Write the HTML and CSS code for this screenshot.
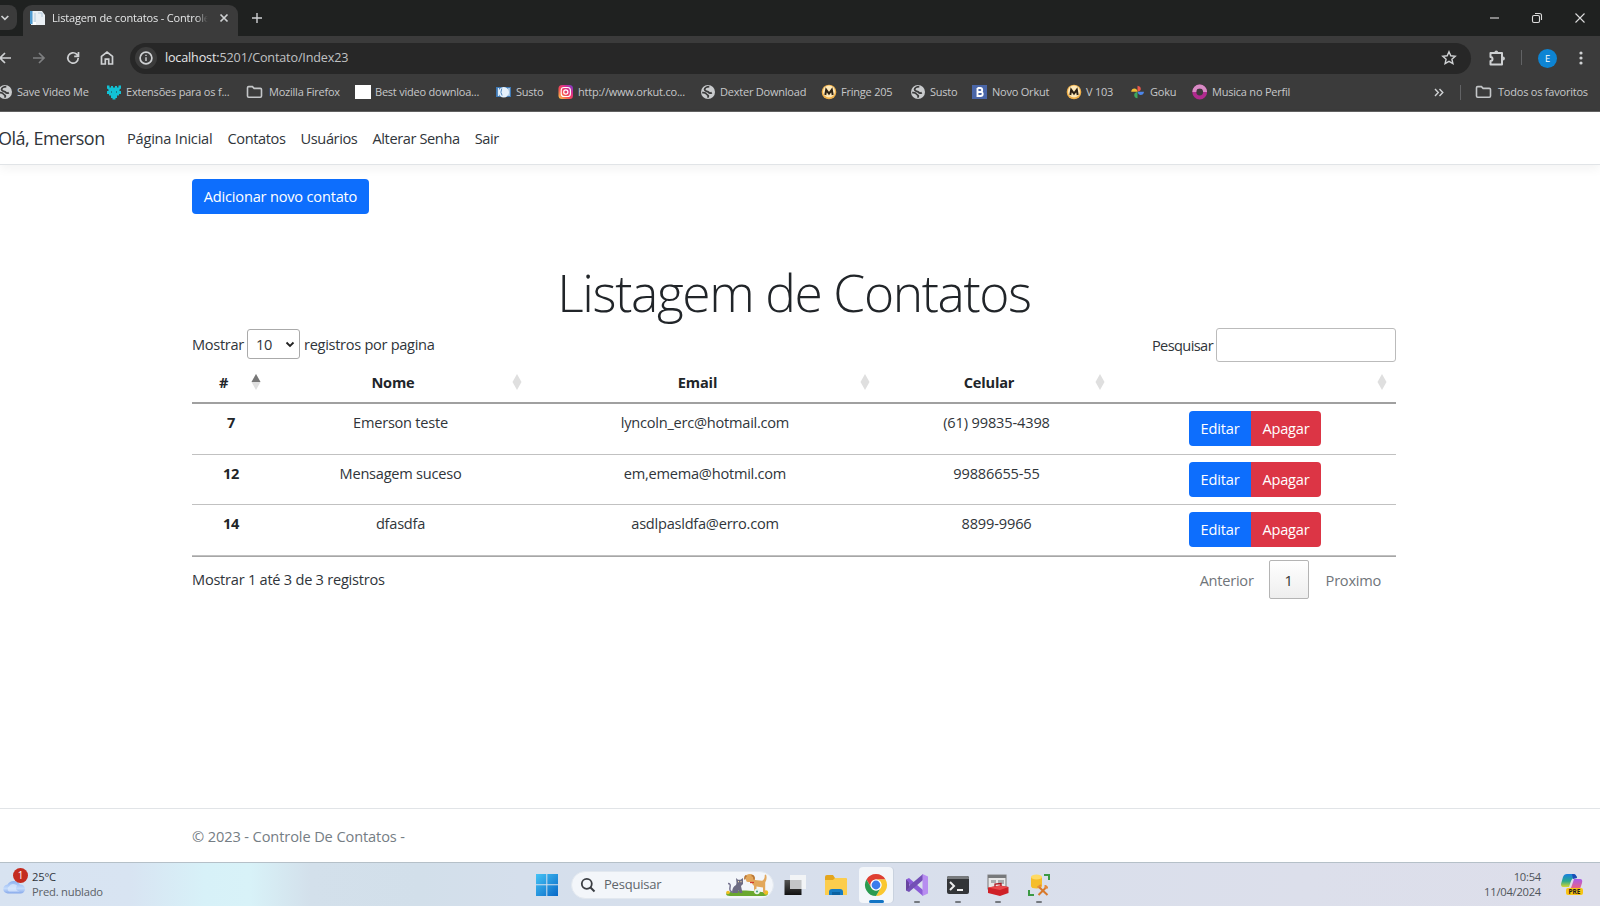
FILE: index.html
```html
<!DOCTYPE html>
<html lang="pt-BR">
<head>
<meta charset="utf-8">
<title>Listagem de contatos - Controle De Contatos</title>
<link rel="stylesheet" href="styles.css">
</head>
<body>
<svg class="defs" aria-hidden="true">
  <symbol id="globe" viewBox="0 0 16 16"><circle cx="8" cy="8" r="7" fill="#c9cbcd"/><path d="M9.300 2.600C7 2.700 4.600 3.900 4.600 5.600c0 2 3.200 1.400 4 2.700.7 1.100 2.300.9 3.200.3" fill="none" stroke="#3b3b3b" stroke-width="1.900"/><path d="M2.200 8.700c2-.2 3.600.3 4.300 1.400.6.900 1.800.8 1.900 1.800 0 .8-.5 1.200-1 1.600" fill="none" stroke="#3b3b3b" stroke-width="1.700"/></symbol>
  <symbol id="folder" viewBox="0 0 17 14"><path d="M1.500 2.800c0-.7.500-1.200 1.200-1.200h3.700l1.700 1.800h6.200c.7 0 1.200.5 1.200 1.200v6.500c0 .7-.5 1.200-1.200 1.200H2.700c-.7 0-1.200-.5-1.200-1.200z" fill="none" stroke="#c4c6c8" stroke-width="1.600"/></symbol>
  <symbol id="emm" viewBox="0 0 16 16"><circle cx="8" cy="8" r="7.300" fill="#f0b04a"/><circle cx="8" cy="7.500" r="6" fill="#ffe9b8"/><path d="M4.300 11l.9-5.200L8 9.500l2.800-3.700.9 5.200" fill="none" stroke="#2c2115" stroke-width="2"/></symbol>
</svg>

<header class="browser">
  <div class="tabstrip">
    <div class="tab-search"><svg width="10" height="8" viewBox="0 0 10 8"><path d="M1.500 2l3.400 3.400L8.300 2" class="ln bold"/></svg></div>
    <div class="tab">
      <svg class="favicon" width="16" height="16" viewBox="0 0 16 16"><path d="M1 1h11l3 4v10H1z" fill="#e9eff4"/><path d="M0 1h2.500v13H0z" fill="#4f9bd0"/><path d="M5 3v12M8 3h4v4" stroke="#b5cbdc" fill="none"/><path d="M3 12h3v3H3z" fill="#fff"/></svg>
      <span class="tab-title">Listagem de contatos - Controle</span>
      <svg class="tab-close" width="10" height="10" viewBox="0 0 10 10"><path d="M1.500 1.500l7 7M8.500 1.500l-7 7" class="ln bold"/></svg>
    </div>
    <svg class="newtab" width="12" height="12" viewBox="0 0 12 12"><path d="M6 1v10M1 6h10" class="ln"/></svg>
    <div class="window-buttons">
      <svg width="10" height="12" viewBox="0 0 10 12"><path d="M0 6h9" class="thin"/></svg>
      <svg width="12" height="12" viewBox="0 0 12 12"><rect x="1.500" y="3.500" width="7" height="7" rx="1.500" class="thin"/><path d="M4 1.500h4.500q2 0 2 2V8" class="thin"/></svg>
      <svg width="12" height="12" viewBox="0 0 12 12"><path d="M1.500 1.500l9 9M10.500 1.500l-9 9" class="thin"/></svg>
    </div>
  </div>

  <div class="toolbar">
    <div class="nav-icons">
      <svg width="14" height="14" viewBox="0 0 14 14"><path d="M13 7H2M7 2L2 7l5 5" class="ln bold"/></svg>
      <svg width="14" height="14" viewBox="0 0 14 14"><path d="M1 7h11M7 2l5 5-5 5" class="ln bold dim"/></svg>
      <svg width="14" height="14" viewBox="0 0 14 14"><path d="M12.200 7A5.200 5.200 0 1 1 10.600 3.200L12 4.600M12.500 1v4.300H8.200" class="ln bold"/></svg>
      <svg width="14" height="16" viewBox="0 0 14 16"><path d="M1.500 14V6.300L7 2 12.500 6.300V14H8.700V9.200H5.300V14z" class="ln bold"/></svg>
    </div>
    <div class="address">
      <span class="info"><svg width="14" height="14" viewBox="0 0 14 14"><circle cx="7" cy="7" r="5.900" class="ln bold"/><path d="M7 6.300V10M7 3.700v1.400" class="ln"/></svg></span>
      <span class="url"><b>localhost:</b>5201/Contato/Index23</span>
      <svg class="star" width="16" height="16" viewBox="0 0 16 16"><path d="M8 1.800l1.800 4 4.400.5-3.300 2.900 1 4.400L8 11.300l-3.900 2.300 1-4.400L1.800 6.300l4.400-.5z" class="ln"/></svg>
    </div>
    <svg class="puzzle" width="18" height="18" viewBox="0 0 18 18"><path d="M2.500 4h11.500v11.500H2.500v-3.600a2 2 0 0 0 0-4z" class="ln heavy" stroke-linejoin="round"/><path d="M6.400 3.500a1.900 1.900 0 0 1 3.800 0z" fill="#c9cbcd"/><circle cx="15" cy="9.500" r="1.900" fill="#c9cbcd"/></svg>
    <i class="divider"></i>
    <span class="avatar">E</span>
    <svg class="kebab" width="4" height="14" viewBox="0 0 4 14" fill="#d0d2d4"><circle cx="2" cy="2" r="1.600"/><circle cx="2" cy="7" r="1.600"/><circle cx="2" cy="12" r="1.600"/></svg>
  </div>

  <div class="bookmarks">
    <span><svg><use href="#globe"/></svg>Save Video Me</span>
    <span><svg viewBox="0 0 16 16"><path d="M1 1.500h2.500v2H5V2h2v1.500h2V2h2v1.500h1.500v-2H15v3l-1.500 1v1.500H15V10h-2v1.500h-2V14H9.500v1.500h-3V14H5v-2.500H3V10H1V7h1.500V5.500L1 4.500z" fill="#12c1d4"/><path d="M5.500 7v2M10.500 7v2" stroke="#18808d" fill="none"/></svg>Extensões para os f...</span>
    <span class="fold"><svg viewBox="0 0 17 14"><use href="#folder"/></svg>Mozilla Firefox</span>
    <span><svg viewBox="0 0 16 16"><path d="M0 1h16v14H0z" fill="#fff"/></svg>Best video downloa...</span>
    <span><svg viewBox="0 0 16 16"><path d="M0 3h15v10H0z" fill="#3f79b5"/><path d="M2.500 4v8M13 4v8" stroke="#d8e8f7" stroke-width="1.300"/><circle cx="7.800" cy="8.300" r="5.200" fill="#e7f1fb"/><path d="M5.800 4.500q-2 4 .3 7" fill="none" stroke="#4e86c0"/></svg>Susto</span>
    <span><svg viewBox="0 0 16 16"><defs><linearGradient id="ig" x1="0" y1="1" x2="1" y2="0"><stop offset="0" stop-color="#ffcf4b"/><stop offset=".4" stop-color="#f54a53"/><stop offset=".7" stop-color="#d42d91"/><stop offset="1" stop-color="#6a3fd0"/></linearGradient></defs><rect x=".5" y="1" width="14.500" height="14" rx="3.500" fill="url(#ig)"/><rect x="3.200" y="3.500" width="9.200" height="9" rx="2.800" fill="none" stroke="#fff" stroke-width="1.100"/><circle cx="7.800" cy="8" r="2.100" fill="none" stroke="#fff" stroke-width="1.200"/></svg>http://www.orkut.co...</span>
    <span><svg><use href="#globe"/></svg>Dexter Download</span>
    <span><svg><use href="#emm"/></svg>Fringe 205</span>
    <span><svg><use href="#globe"/></svg>Susto</span>
    <span><svg viewBox="0 0 16 16"><path d="M0 1h15v14H0z" fill="#4a66a8"/><path d="M5.500 4v8h3q2.200 0 2.200-2.100T8.500 8h-3M5.500 4h2.700q2 0 2 2t-2 2" fill="none" stroke="#fff" stroke-width="1.900"/></svg>Novo Orkut</span>
    <span><svg><use href="#emm"/></svg>V 103</span>
    <span><svg viewBox="0 0 16 16"><path d="M7.500 7.700V1.800q3.300.5 3.300 3.300 0 2-3.300 2.600z" fill="#e8584a"/><path d="M7.500 7.700h6.500q-.5 3.300-3.300 3.300-2.300 0-3.200-3.300z" fill="#4c86ea"/><path d="M7.500 7.700v6.500q-3.300-.5-3.300-3.300 0-2.400 3.300-3.200z" fill="#3fa65c"/><path d="M7.500 7.700H1.200q.5-3.300 3.200-3.300 2.500 0 3.100 3.300z" fill="#f3bd35"/></svg>Goku</span>
    <span><svg viewBox="0 0 16 16"><circle cx="7.700" cy="8" r="5.400" fill="none" stroke="#b02a8f" stroke-width="4"/><path d="M2.300 8a5.400 5.400 0 0 1 10.800 0" fill="none" stroke="#d78cc4" stroke-width="4"/></svg>Musica no Perfil</span>
    <svg class="more" width="10" height="9" viewBox="0 0 10 9"><path d="M1 1l3.300 3.500L1 8M5.500 1l3.300 3.500L5.500 8" class="ln"/></svg>
    <i class="divider"></i>
    <span class="fold all"><svg viewBox="0 0 17 14"><use href="#folder"/></svg>Todos os favoritos</span>
  </div>
</header>

<nav class="navbar">
  <a class="brand">Olá, Emerson</a>
  <a>Página Inicial</a><a>Contatos</a><a>Usuários</a><a>Alterar Senha</a><a>Sair</a>
</nav>

<main class="container">
  <a class="btn primary add">Adicionar novo contato</a>
  <h1>Listagem de Contatos</h1>
  <div class="controls">
    <label class="length">Mostrar <span class="select">10<svg width="10" height="7" viewBox="0 0 10 7"><path d="M1.500 1.500L5 5l3.500-3.500" fill="none" stroke="#222" stroke-width="1.800"/></svg></span> registros por pagina</label>
    <label class="search">Pesquisar<input type="text"></label>
  </div>
  <table>
    <colgroup><col class="c1"><col class="c2"><col class="c3"><col class="c4"><col></colgroup>
    <thead><tr><th class="asc">#</th><th>Nome</th><th>Email</th><th>Celular</th><th></th></tr></thead>
    <tbody>
      <tr><th>7</th><td>Emerson teste</td><td>lyncoln_erc@hotmail.com</td><td>(61) 99835-4398</td><td><div class="group"><a class="btn primary">Editar</a><a class="btn danger">Apagar</a></div></td></tr>
      <tr><th>12</th><td>Mensagem suceso</td><td>em,emema@hotmil.com</td><td>99886655-55</td><td><div class="group"><a class="btn primary">Editar</a><a class="btn danger">Apagar</a></div></td></tr>
      <tr><th>14</th><td>dfasdfa</td><td>asdlpasldfa@erro.com</td><td>8899-9966</td><td><div class="group"><a class="btn primary">Editar</a><a class="btn danger">Apagar</a></div></td></tr>
    </tbody>
  </table>
  <div class="table-foot">
    <span class="count">Mostrar 1 até 3 de 3 registros</span>
    <div class="pager"><a>Anterior</a><a class="current">1</a><a>Proximo</a></div>
  </div>
</main>

<footer class="page-footer">© 2023 - Controle De Contatos -</footer>

<div class="taskbar">
  <div class="weather">
    <svg width="28" height="32" viewBox="0 0 28 32"><defs><linearGradient id="cl" x1="0" y1="0" x2="0" y2="1"><stop offset="0" stop-color="#8db1f0"/><stop offset=".6" stop-color="#c4dbfc"/><stop offset="1" stop-color="#86a8ea"/></linearGradient></defs><path d="M8 27.500a4.500 4.500 0 0 1-.5-9 7 6.500 0 0 1 12.500 0h.5a4.500 4.500 0 0 1 0 9z" fill="url(#cl)"/><path d="M9 25.500a3 3 0 0 1 0-5 5 5 0 0 1 8-1q-3 5 3 6z" fill="#dceafe" opacity=".7"/><circle cx="20.500" cy="9.500" r="7.500" fill="#c42b1f"/></svg>
    <b class="badge">1</b>
    <p>25°C<br><span>Pred. nublado</span></p>
  </div>
  <div class="apps">
    <svg class="start" width="22" height="22" viewBox="0 0 22 22"><defs><linearGradient id="wn" x1="0" y1="0" x2="1" y2="1"><stop offset="0" stop-color="#45c3f5"/><stop offset="1" stop-color="#0868c7"/></linearGradient></defs><path d="M0 0h10.300v10.300H0zM11.300 0H22v10.300H11.300zM0 11.300h10.300V22H0zM11.300 11.300H22V22H11.300z" fill="url(#wn)"/></svg>
    <div class="searchbox">
      <svg width="16" height="16" viewBox="0 0 16 16"><circle cx="6.800" cy="6.800" r="5" fill="none" stroke="#3a3d42" stroke-width="1.800"/><path d="M10.500 10.500l4 4" stroke="#3a3d42" stroke-width="2"/></svg>
      <span>Pesquisar</span>
      <svg class="pets" width="46" height="24" viewBox="0 0 46 24"><path d="M2 20.500q8-3.500 20-3t22 2.500q0 3-4 3H6q-4 0-4-2.500z" fill="#6aa82f"/><circle cx="4" cy="19.500" r="1.800" fill="#f0bf20"/><circle cx="42" cy="19.500" r="2.200" fill="#f0bf20"/><path d="M8 20q0-6 4-8l.5-2-.5-5 2 1.700h2.500L19 5v6l-2 2 1.500 7h-3l-.7-3-.8 3z" fill="#6d6c83"/><path d="M9 19.500q-4-1-3-5t-2-4" fill="none" stroke="#777590" stroke-width="1.500"/><path d="M14 8.700h1M16.500 8.700h1" stroke="#f4ddb0" stroke-width="1.200"/><path d="M22 2.500q4-2.800 7.500 0 1.500 2 1.500 4.500l7 .8q3-1 2.700-5.800l1.300-.5q1.500 4-.8 8V20H39v-5.500l-6.500-1V20H30v-7q-2-1.500-2.500-4h-3.500q-2-.2-2-2z" fill="#e2a75b"/><path d="M27.500 2.500q3 0 2.500 4M22.500 2.500q-2 1-1.500 4" stroke="#b77534" stroke-width="1.600" fill="none"/><path d="M26 9.500h4" stroke="#d33c2f" stroke-width="1.300"/><circle cx="33" cy="18.500" r="2.800" fill="#e9f6ed"/><circle cx="33" cy="18.500" r="1.100" fill="#4fa487"/></svg>
    </div>
    <div class="app"><svg width="24" height="24" viewBox="0 0 24 24"><defs><linearGradient id="tv" x1="0" y1="0" x2="0" y2="1"><stop offset="0" stop-color="#555"/><stop offset="1" stop-color="#111"/></linearGradient></defs><path d="M1.500 7h17v15h-17z" fill="url(#tv)"/><path d="M7 2h16v14H7z" fill="#f2f4f6"/><path d="M7 7h11.500v9H7z" fill="#c3c5c7"/></svg></div>
    <div class="app"><svg width="24" height="24" viewBox="0 0 24 24"><path d="M1 4q0-2 2-2h6l2 3h9q3 0 3 2v14H1z" fill="#e4a51c"/><path d="M1 7h8l2-2h11q1 0 1 2v15H1z" fill="#fccd4d"/><path d="M5 22v-3q0-3 3-3h8q3 0 3 3v3z" fill="#167bc3"/><path d="M8 19h8v3H8z" fill="#0b61a0"/></svg></div>
    <div class="app active"><svg width="24" height="24" viewBox="0 0 24 24"><path d="M2.470 6.500A11 11 0 0 1 21.530 6.500H12a5.500 5.500 0 0 0-4.760 8.250z" fill="#df3f32"/><path d="M21.530 6.500A11 11 0 0 1 12 23l4.760-8.250A5.500 5.500 0 0 0 12 6.500z" fill="#fac72f"/><path d="M12 23A11 11 0 0 1 2.470 6.500l4.770 8.250a5.500 5.500 0 0 0 9.520 0z" fill="#2a9b50"/><circle cx="12" cy="12" r="5.500" fill="#fff"/><circle cx="12" cy="12" r="4.400" fill="#3b7ded"/></svg></div>
    <div class="app run"><svg width="24" height="24" viewBox="0 0 24 24"><path d="M1 6.500L4 5l14 12v6L4.500 11.500 1 14z" fill="#8b5cd6"/><path d="M1 17.500L4 19 18 7V1L4.500 12.500 1 10z" fill="#7350b5"/><path d="M1 6.500l3 3v5l-3 3z" fill="#68449f"/><path d="M17.500 1L23 3.500v17L17.500 23z" fill="#b78df0"/></svg></div>
    <div class="app run"><svg width="24" height="24" viewBox="0 0 24 24"><rect x="1" y="3" width="22" height="18" rx="2" fill="#333538"/><path d="M1 6V5q0-2 2-2h18q2 0 2 2v1z" fill="#777a7d"/><path d="M4 9l4 4-4 4M11 17h6" fill="none" stroke="#eee" stroke-width="2"/></svg></div>
    <div class="app run"><svg width="24" height="24" viewBox="0 0 24 24"><path d="M2 2h18v14H2z" fill="#e7e7e7" stroke="#8a8a8a" stroke-width="1.200"/><path d="M2 2h18v3H2z" fill="#77797b"/><path d="M5 7h5v3H5zM12 7h6v4h-6z" fill="#a9adaf"/><path d="M2 14.500l12-2 8.500 1.500v6L14 23 2 20z" fill="#cf2027"/><path d="M2 14.500l12-2 8.500 1.500-8.500 3z" fill="#e8484b"/><path d="M9 13.500v-2.300l6-.7v2.500" fill="none" stroke="#a9141c" stroke-width="1.300"/></svg></div>
    <div class="app run"><svg width="24" height="24" viewBox="0 0 24 24"><path d="M4 4v9q0 2.500 5.500 2.500T15 13V4z" fill="#f5bd2b"/><ellipse cx="9.500" cy="4" rx="5.500" ry="2.500" fill="#ffda63"/><path d="M17 2h5v5M2 17v5h5" fill="none" stroke="#3b9944" stroke-width="2"/><path d="M12 14l8.500 8M20 13.500L11.500 22" stroke="#d8792b" stroke-width="2"/><path d="M10.500 14.500l3.500-2.500M18.500 12v2.500H21" fill="none" stroke="#e58b3b" stroke-width="2"/></svg></div>
  </div>
  <div class="tray">
    <p>10:54<br>11/04/2024</p>
    <div class="copilot">
      <svg width="24" height="24" viewBox="0 0 24 24"><defs><linearGradient id="ca" x1="0" y1="0" x2="0" y2="1"><stop offset="0" stop-color="#187fe0"/><stop offset=".55" stop-color="#2aa98e"/><stop offset="1" stop-color="#d6d52f"/></linearGradient><linearGradient id="cb" x1="0" y1="0" x2="0" y2="1"><stop offset="0" stop-color="#a85bea"/><stop offset="1" stop-color="#ef647c"/></linearGradient></defs><path d="M7 1h7q2 0 3 4h-3q-2 0-3 3l-2 6H3q-2 0-2-3l2-7q1-3 4-3z" fill="url(#ca)"/><path d="M13 1q3 0 4 4l-4 1-1-5z" fill="#1d4cb5"/><path d="M14 6h6q3 0 2 4l-2 6H9q2 0 3-4z" fill="url(#cb)"/></svg>
      <b>PRE</b>
    </div>
  </div>
</div>
</body>
</html>
```
FILE: styles.css
```css
* { box-sizing: border-box; }
body {
  margin: 0; width: 1600px; height: 906px; overflow: hidden;
  display: flex; flex-direction: column;
  font-family: "Open Sans", "Noto Sans", sans-serif;
  font-size: 14.6px; line-height: 22px; letter-spacing: -0.25px;
  color: #30353a; background: #fff;
}
.defs { display: none; }
svg { flex: none; }
p { margin: 0; }
.ln { fill: none; stroke: #cfd1d3; stroke-width: 1.4; }
.ln.bold { stroke-width: 1.7; }
.ln.heavy { stroke-width: 2; }
.ln.dim { stroke: #7e7f80; }
.thin { fill: none; stroke: #dcdcdc; stroke-width: 1.1; }

/* Browser chrome */
.browser { height: 112px; flex: none; background: #3b3b3b; color: #c7c8ca; border-bottom: 1px solid #626262; font-size: 11px; }
.tabstrip { height: 36px; display: flex; background: #1f2120; }
.tab-search { width: 17px; height: 25px; margin: 5px 6px 0 0; background: #3b3b3b; border-radius: 0 8px 8px 0; display: flex; align-items: center; }
.tab { width: 215px; height: 31px; margin-top: 5px; padding: 0 9px 5px 7px; background: #3b3b3b; border-radius: 9px 9px 0 0; display: flex; align-items: center; }
.tab-title { width: 164px; margin-left: 6px; white-space: nowrap; color: #e6e7e8; letter-spacing: -0.16px; -webkit-mask-image: linear-gradient(90deg, #000 88%, transparent 95%); mask-image: linear-gradient(90deg, #000 88%, transparent 95%); }
.tab-close { margin-left: auto; }
.newtab { margin: 12px 0 0 13px; }
.window-buttons { display: flex; gap: 31px; margin: 12px 14px 0 auto; }
.toolbar { height: 42px; display: flex; align-items: center; padding: 1px 17px 0 0; }
.nav-icons { display: flex; align-items: center; gap: 20px; width: 132px; margin-left: -2px; }
.address { width: 1342px; height: 31px; margin-top: 1px; border-radius: 16px; background: #272727; display: flex; align-items: center; padding: 0 14px 0 5px; }
.info { width: 22px; height: 22px; border-radius: 50%; background: #3b3b3b; display: grid; place-items: center; }
.url { margin-left: 8px; font-size: 12.6px; letter-spacing: -0.15px; color: #c0c2c4; }
.url b { font-weight: 400; color: #e5e6e7; }
.star { margin-left: auto; }
.puzzle { margin-left: 17px; }
.divider { width: 1px; height: 15px; background: #626365; }
.toolbar .divider { margin-left: 15px; }
.avatar { width: 19px; height: 19px; margin-left: 16px; margin-top: 2px; border-radius: 50%; background: #0d84d3; color: #fff; font-size: 9.5px; line-height: 19px; text-align: center; }
.kebab { margin-left: 22px; }
.bookmarks {
  height: 28px; display: grid; align-items: center;
  grid-template-columns: 109px 140px 109px 141px 62px 142px 121px 89px 62px 94px 64px 62px 242px 26px 15px 1fr;
  margin-left: -3px;
}
.bookmarks span { display: flex; align-items: center; gap: 4px; white-space: nowrap; letter-spacing: -0.22px; }
.bookmarks span svg { width: 16px; height: 16px; }
.bookmarks .fold { gap: 6px; }
.bookmarks .fold svg { width: 17px; height: 14px; }

/* Page */
.navbar { height: 53px; flex: none; display: flex; align-items: center; gap: 15px; border-bottom: 1px solid #e1e4e7; box-shadow: 0 4px 10px rgba(0,0,0,.05); white-space: nowrap; letter-spacing: -0.39px; }
.brand { width: 114px; margin-left: -2px; font-size: 18px; letter-spacing: -0.48px; }
.navbar a:nth-child(2) { letter-spacing: -0.22px; }
.container { width: 1204px; margin-left: 192px; flex: none; height: 643px; padding-top: 14px; }
.btn { display: inline-block; height: 35px; line-height: 35px; text-align: center; color: #fff; border-radius: 4px; white-space: nowrap; letter-spacing: -0.2px; }
.primary { background: #0d6efd; }
.danger { background: #dc3545; }
.add { width: 177px; }
h1 { margin: 44px 0 0; height: 70px; font-size: 51.5px; line-height: 69px; font-weight: 300; text-align: center; letter-spacing: -1.4px; color: #212529; }
.controls { height: 34px; display: flex; justify-content: space-between; }
.length { display: flex; align-items: center; height: 32px; gap: 4px; }
.length { letter-spacing: -0.3px; }
.select { width: 53px; height: 30px; margin-left: -1px; border: 1px solid #aaa; border-radius: 3px; padding: 0 4px 0 8px; display: flex; align-items: center; justify-content: space-between; }
.search { display: flex; align-items: center; gap: 3px; letter-spacing: -0.6px; }
.search input { width: 180px; height: 34px; border: 1px solid #bbb; border-radius: 3px; background: #fff; }
table { width: 1204px; table-layout: fixed; border-collapse: separate; border-spacing: 0; text-align: center; border-bottom: 1px solid #a6a6a6; }
.c1 { width: 78px; } .c2 { width: 261px; } .c3 { width: 348px; } .c4 { width: 235px; }
th { color: #212529; }
thead th { height: 42px; padding: 0 22px 1px 7px; letter-spacing: -0.18px; border-bottom: 2px solid #a0a0a0; background: url("data:image/svg+xml,%3Csvg xmlns='http://www.w3.org/2000/svg' width='10' height='16'%3E%3Cpath d='M5 0l4.500 8L5 16 .5 8z' fill='%23dfdfdf'/%3E%3C/svg%3E") no-repeat right 9px top 12px; }
thead .asc { background-image: url("data:image/svg+xml,%3Csvg xmlns='http://www.w3.org/2000/svg' width='10' height='16'%3E%3Cpath d='M5 0l4.500 8L5 16 .5 8z' fill='%23dfdfdf'/%3E%3Cpath d='M5 0l4.500 8h-9z' fill='%23777'/%3E%3C/svg%3E"); }
tbody th, tbody td { height: 50.5px; padding: 7px 7px 0; vertical-align: top; border-bottom: 1px solid #c1c1c1; }
tbody td:nth-child(4) { letter-spacing: -0.15px; }
.group { display: flex; justify-content: center; }
.group .primary { width: 62px; border-radius: 4px 0 0 4px; }
.group .danger { width: 70px; border-radius: 0 4px 4px 0; }
.table-foot { display: flex; justify-content: space-between; padding-top: 3px; }
.count { padding-top: 8px; }
.pager { display: flex; color: #70757a; line-height: 40px; }
.pager a { padding: 0 15px 0 17px; }
.pager .current { width: 40px; height: 39px; line-height: 38px; padding: 0; text-align: center; color: #333; border: 1px solid #b4b4b4; border-radius: 2px; background: linear-gradient(#fff, #eee); }
.page-footer { height: 54px; flex: none; padding: 16px 0 0 192px; border-top: 1px solid #e1e4e7; color: #757d84; letter-spacing: -0.11px; }

/* Taskbar */
.taskbar {
  height: 44px; flex: none; position: relative; display: flex; border-top: 1px solid #b5c0c8; font-size: 11.2px; line-height: 15px; letter-spacing: -0.2px; color: #30363c;
  background: linear-gradient(90deg, #d8e3f1 0, #d8e4f2 130px, #d7f1f8 205px, #d8f2f8 250px, #d3e0eb 310px, #d2dfea 420px, #d5dfec 520px, #d8dfec 900px, #dcdfeb 1300px, #dddeea 1600px);
}
.weather { position: relative; width: 536px; display: flex; gap: 4px; padding-top: 3px; }
.weather p { padding-top: 3px; }
.weather span { color: #5b6166; }
.badge { position: absolute; left: 13px; top: 5px; width: 15px; text-align: center; font-size: 10px; font-weight: 400; color: #fff; }
.apps { display: flex; align-items: center; }
.searchbox { width: 203px; height: 28px; margin: 0 4px 0 13px; padding: 0 3px 0 8px; border-radius: 14px; background: #f3f6fa; border: 1px solid #e2e8ef; display: flex; align-items: center; font-size: 13px; color: #60656a; }
.searchbox span { margin-left: 8px; }
.pets { margin-left: auto; }
.app { position: relative; width: 34px; height: 36px; margin-right: 6.7px; display: grid; place-items: center; }
.app.active { background: #f3f6fa; border-radius: 4px; box-shadow: 1px 0 0 #c9d2df; }
.app.active::after, .app.run::after { content: ""; position: absolute; bottom: 0; left: 14px; width: 6px; height: 2px; border-radius: 2px; background: #74797f; }
.app.active::after { left: 10px; width: 15px; height: 3px; background: #1374c4; }
.tray { display: flex; margin-left: auto; padding-right: 16px; gap: 19px; align-items: center; text-align: right; color: #50555a; }
.tray p { padding-bottom: 2px; letter-spacing: -0.25px; }
.copilot { position: relative; width: 24px; height: 24px; }
.copilot b { position: absolute; left: 6px; top: 15px; width: 17px; height: 7px; border-radius: 2px; background: #f8c414; color: #1b1b1b; font-size: 6.500px; line-height: 7px; text-align: center; letter-spacing: 0; }
```
